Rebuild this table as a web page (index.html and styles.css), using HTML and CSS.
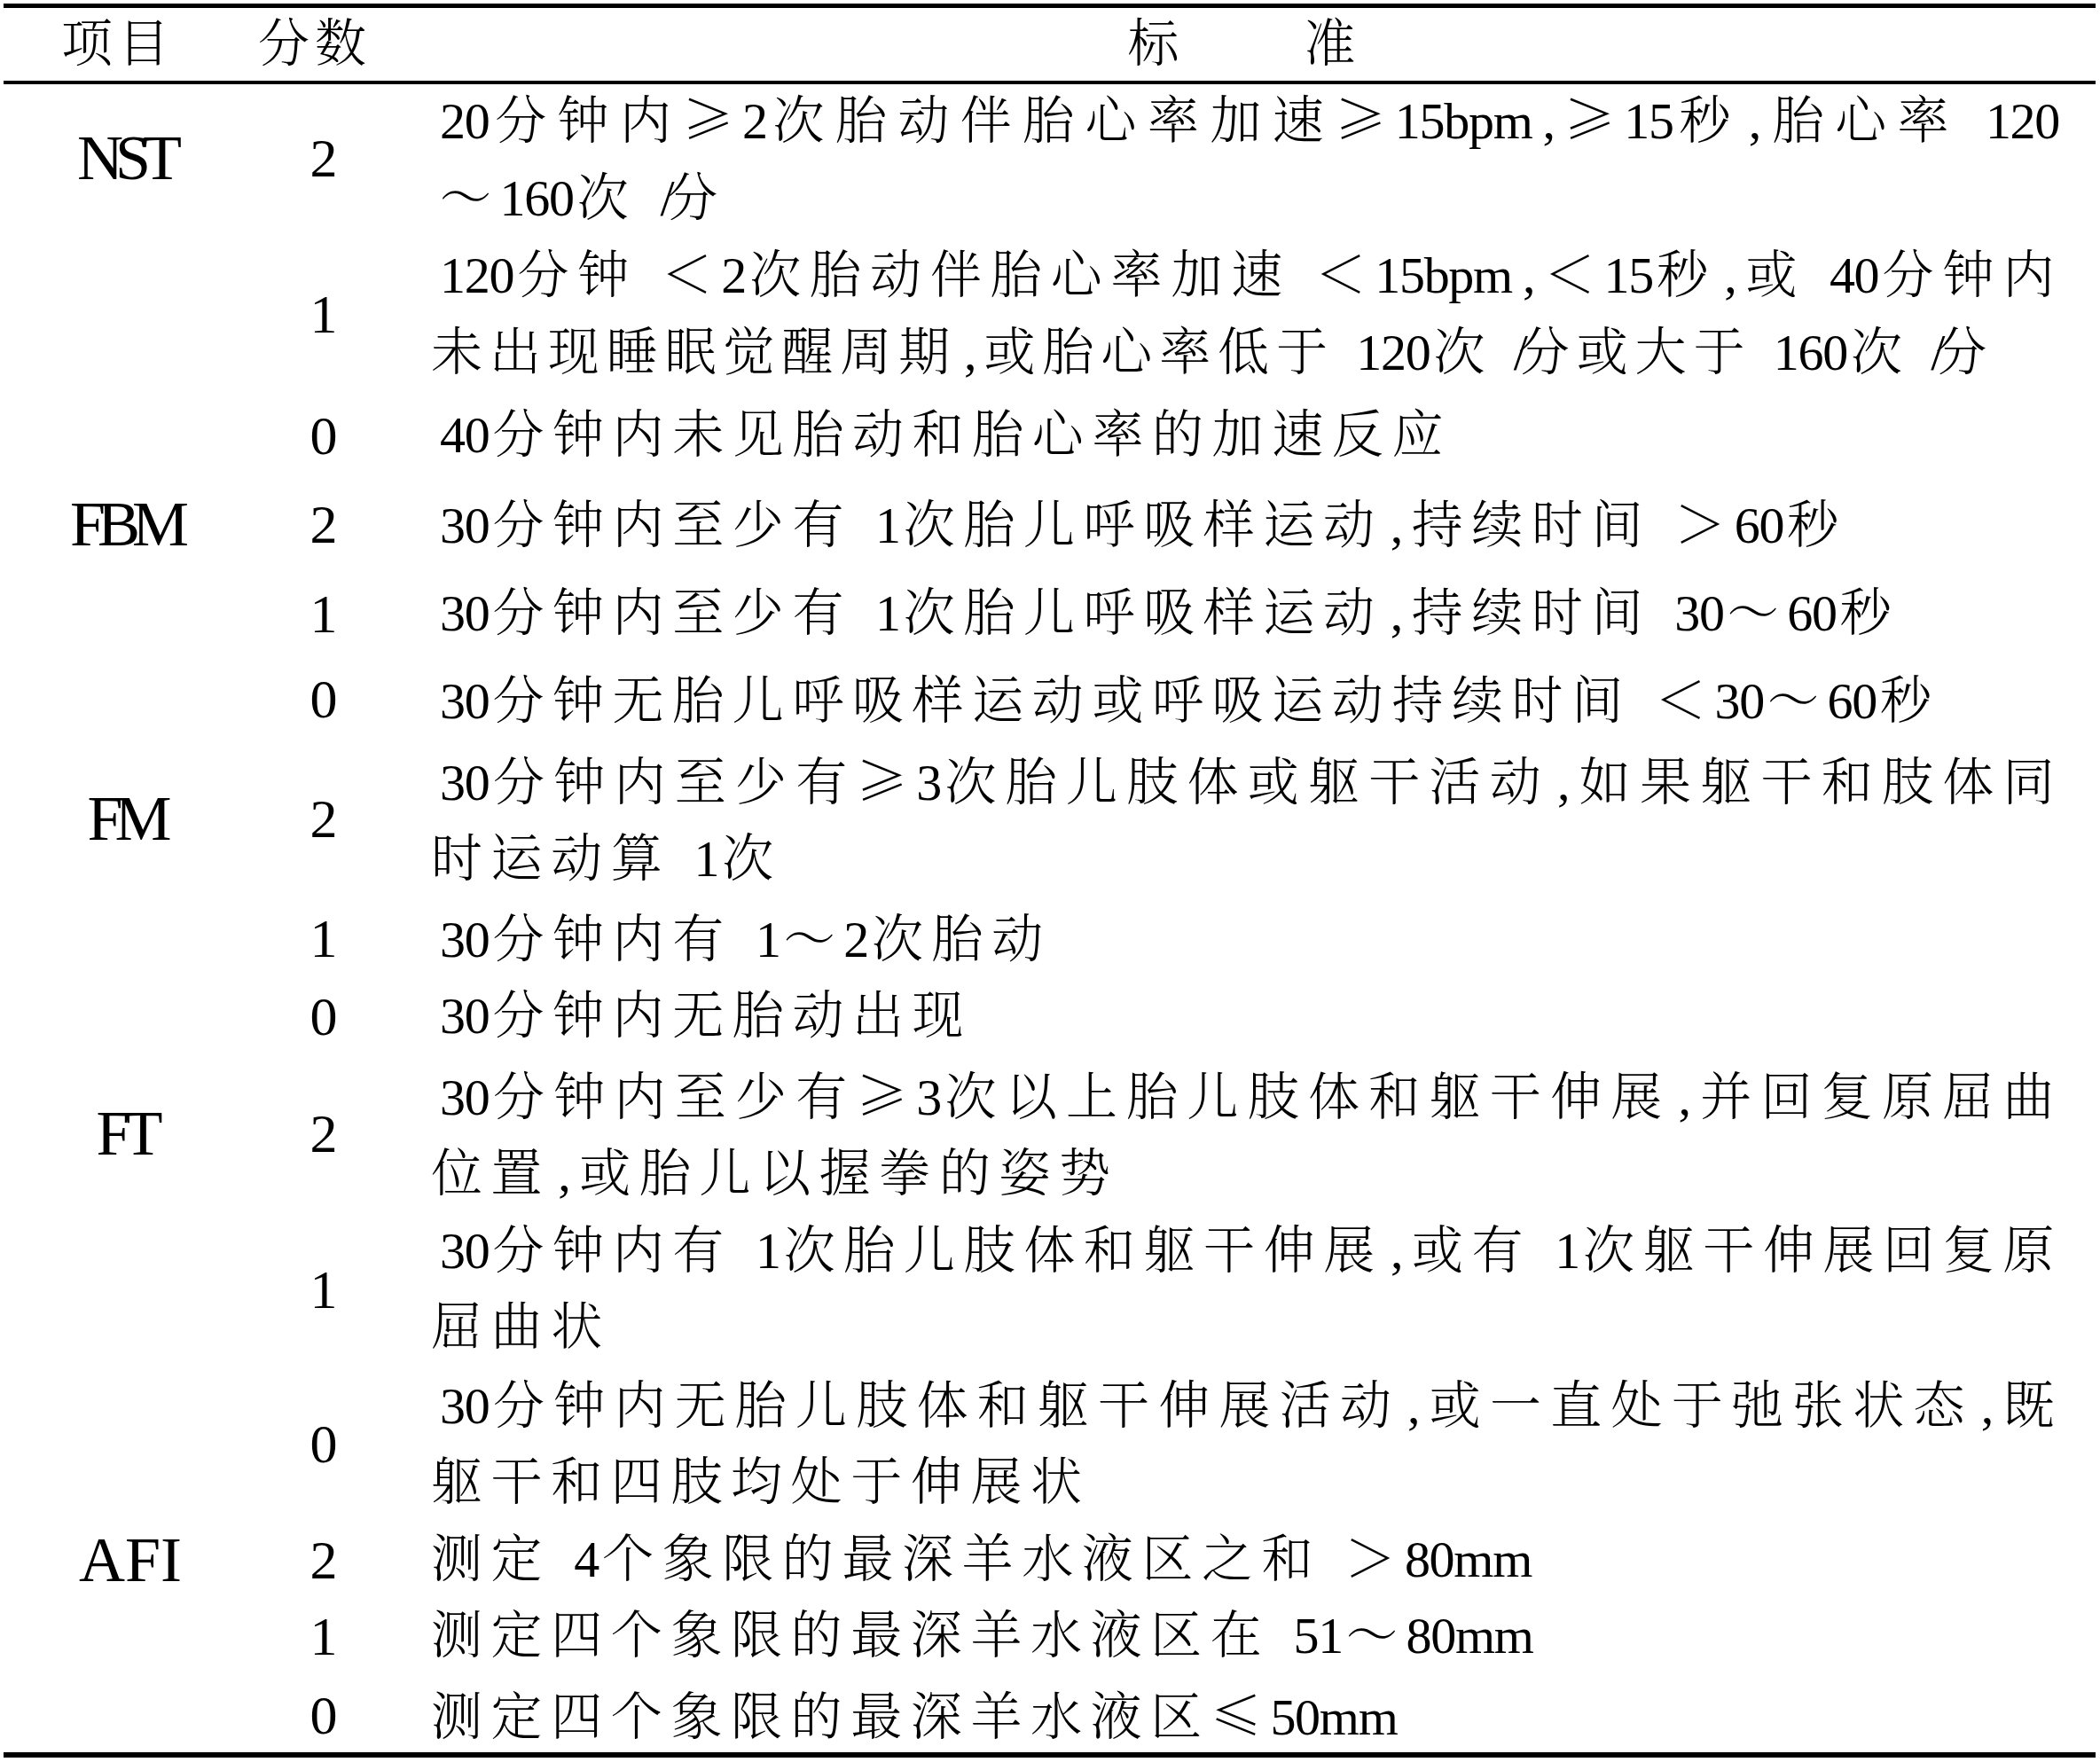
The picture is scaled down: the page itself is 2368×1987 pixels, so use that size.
FILE: index.html
```html
<!DOCTYPE html>
<html lang="zh-CN">
<head>
<meta charset="utf-8">
<title>胎儿生物物理评分</title>
<link rel="stylesheet" href="styles.css">
</head>
<body>
<div class="page">
  <div class="tbl">
    <div class="row head">
      <div class="h1">项目</div>
      <div class="h2">分数</div>
      <div class="h3"><span>标</span><span>准</span></div>
    </div>

    <div class="body">
      <div class="row">
        <div class="lab">NST</div>
        <div class="sc">2</div>
        <div class="cr">
          <div class="ln j ind"><span class="n">20</span>分钟内<span class="s">≥</span><span class="n">2</span>次胎动伴胎心率加速<span class="s">≥</span><span class="n">15bpm</span><span class="cm">,</span><span class="s">≥</span><span class="n">15</span>秒<span class="cm">,</span>胎心率 <span class="n">120</span></div>
          <div class="ln ind">～<span class="n">160</span>次 <span class="sl">/</span>分</div>
        </div>
      </div>
      <div class="row">
        <div class="lab"></div>
        <div class="sc">1</div>
        <div class="cr">
          <div class="ln j ind"><span class="n">120</span>分钟 ＜<span class="n">2</span>次胎动伴胎心率加速 ＜<span class="n">15bpm</span><span class="cm">,</span>＜<span class="n">15</span>秒<span class="cm">,</span>或 <span class="n">40</span>分钟内</div>
          <div class="ln narrow">未出现睡眠觉醒周期<span class="cm">,</span>或胎心率低于 <span class="n">120</span>次 <span class="sl">/</span>分或大于 <span class="n">160</span>次 <span class="sl">/</span>分</div>
        </div>
      </div>
      <div class="row">
        <div class="lab"></div>
        <div class="sc">0</div>
        <div class="cr loose">
          <div class="ln ind"><span class="n">40</span>分钟内未见胎动和胎心率的加速反应</div>
        </div>
      </div>

      <div class="row">
        <div class="lab">FBM</div>
        <div class="sc">2</div>
        <div class="cr loose more-top">
          <div class="ln ind"><span class="n">30</span>分钟内至少有 <span class="n">1</span>次胎儿呼吸样运动<span class="cm">,</span>持续时间 ＞<span class="n">60</span>秒</div>
        </div>
      </div>
      <div class="row">
        <div class="lab"></div>
        <div class="sc">1</div>
        <div class="cr loose">
          <div class="ln ind"><span class="n">30</span>分钟内至少有 <span class="n">1</span>次胎儿呼吸样运动<span class="cm">,</span>持续时间 <span class="n">30</span>～<span class="n">60</span>秒</div>
        </div>
      </div>
      <div class="row">
        <div class="lab"></div>
        <div class="sc">0</div>
        <div class="cr loose no-bottom">
          <div class="ln ind"><span class="n">30</span>分钟无胎儿呼吸样运动或呼吸运动持续时间 ＜<span class="n">30</span>～<span class="n">60</span>秒</div>
        </div>
      </div>

      <div class="row">
        <div class="lab">FM</div>
        <div class="sc">2</div>
        <div class="cr t">
          <div class="ln j ind"><span class="n">30</span>分钟内至少有<span class="s">≥</span><span class="n">3</span>次胎儿肢体或躯干活动<span class="cm">,</span>如果躯干和肢体同</div>
          <div class="ln">时运动算 <span class="n">1</span>次</div>
        </div>
      </div>
      <div class="row">
        <div class="lab"></div>
        <div class="sc">1</div>
        <div class="cr t gap4">
          <div class="ln ind"><span class="n">30</span>分钟内有 <span class="n">1</span>～<span class="n">2</span>次胎动</div>
        </div>
      </div>
      <div class="row">
        <div class="lab"></div>
        <div class="sc">0</div>
        <div class="cr t">
          <div class="ln ind"><span class="n">30</span>分钟内无胎动出现</div>
        </div>
      </div>

      <div class="row">
        <div class="lab">FT</div>
        <div class="sc">2</div>
        <div class="cr t">
          <div class="ln j ind"><span class="n">30</span>分钟内至少有<span class="s">≥</span><span class="n">3</span>次以上胎儿肢体和躯干伸展<span class="cm">,</span>并回复原屈曲</div>
          <div class="ln">位置<span class="cm">,</span>或胎儿以握拳的姿势</div>
        </div>
      </div>
      <div class="row">
        <div class="lab"></div>
        <div class="sc">1</div>
        <div class="cr t">
          <div class="ln j ind"><span class="n">30</span>分钟内有 <span class="n">1</span>次胎儿肢体和躯干伸展<span class="cm">,</span>或有 <span class="n">1</span>次躯干伸展回复原</div>
          <div class="ln">屈曲状</div>
        </div>
      </div>
      <div class="row">
        <div class="lab"></div>
        <div class="sc">0</div>
        <div class="cr t gap3">
          <div class="ln j ind"><span class="n">30</span>分钟内无胎儿肢体和躯干伸展活动<span class="cm">,</span>或一直处于弛张状态<span class="cm">,</span>既</div>
          <div class="ln">躯干和四肢均处于伸展状</div>
        </div>
      </div>

      <div class="row">
        <div class="lab afi">AFI</div>
        <div class="sc">2</div>
        <div class="cr t">
          <div class="ln">测定 <span class="n">4</span>个象限的最深羊水液区之和 ＞<span class="n">80mm</span></div>
        </div>
      </div>
      <div class="row">
        <div class="lab"></div>
        <div class="sc">1</div>
        <div class="cr t">
          <div class="ln">测定四个象限的最深羊水液区在 <span class="n">51</span>～<span class="n">80mm</span></div>
        </div>
      </div>
      <div class="row">
        <div class="lab"></div>
        <div class="sc">0</div>
        <div class="cr t">
          <div class="ln">测定四个象限的最深羊水液区<span class="s">≤</span><span class="n">50mm</span></div>
        </div>
      </div>
    </div>
  </div>
</div>
</body>
</html>
```

FILE: styles.css
```css
html, body {
  margin: 0;
  padding: 0;
  background: #ffffff;
  color: #000000;
}

.page {
  margin: 4px 5px 0 4px;
}

.tbl {
  border-top: 5px solid #000;
  border-bottom: 6px solid #000;
}

.body {
  margin-top: -7px;
  margin-bottom: -4px;
}

.row {
  display: grid;
  grid-template-columns: 286px 150px 1fr;
  align-items: center;
}

/* header */
.head {
  position: relative;
  z-index: 1;
  height: 82px;
  border-bottom: 4px solid #000;
  font-family: "Noto Serif CJK SC", "Noto Sans CJK SC", sans-serif;
  font-weight: 300;
  font-size: 58px;
  line-height: 71px;
}

.head > div {
  padding-bottom: 11px;
}

.h1 {
  text-align: center;
  letter-spacing: 6px;
  padding-right: 28px;
}

.h2 {
  text-align: center;
  letter-spacing: 6px;
  padding-right: 20px;
}

.h3 {
  display: flex;
  justify-content: center;
  gap: 141px;
  padding-left: 46px;
  padding-right: 49px;
}

/* body cells */
.lab {
  font-family: "Liberation Serif", serif;
  font-size: 72px;
  line-height: 1;
  letter-spacing: -9px;
  text-align: center;
  padding-right: 11px;
}

.lab.afi {
  letter-spacing: 0;
  padding-right: 0;
}

.sc {
  font-family: "Liberation Serif", serif;
  font-size: 62px;
  line-height: 1;
  text-align: center;
}

.cr {
  padding: 0 37px 0 46px;
  font-family: "Liberation Serif", "Noto Serif CJK SC", "Noto Sans CJK SC", serif;
  font-weight: 300;
  font-size: 58px;
  line-height: 87px;
  letter-spacing: 9.6px;
  word-spacing: 2px;
}

.cr.t {
  line-height: 86.25px;
}

.cr.loose {
  padding-top: 6px;
  padding-bottom: 6px;
}

.cr.loose.more-top {
  padding-top: 9px;
}

.cr.loose.no-bottom {
  padding-bottom: 0;
}

.cr.gap4 {
  padding-top: 4px;
}

.cr.gap3 {
  padding-top: 3px;
}

.ln {
  white-space: nowrap;
}

.ln.narrow {
  letter-spacing: 7.9px;
}

.ind {
  padding-left: 10px;
}

.j {
  text-align: justify;
  text-align-last: justify;
}

.n {
  letter-spacing: -1.3px;
  margin-right: 4px;
}

.cm {
  margin-left: 8px;
}

.s {
  font-family: "Noto Serif CJK SC", "Noto Sans CJK SC", sans-serif;
}

.sl {
  margin-right: -19px;
}
```
